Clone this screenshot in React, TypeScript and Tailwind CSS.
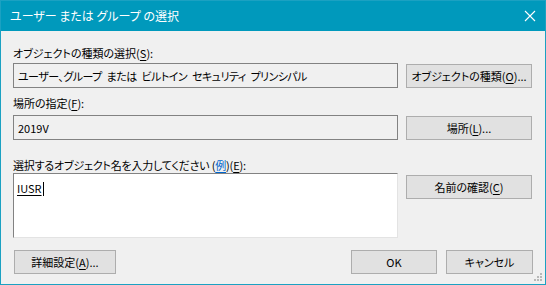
import React from "react";

const font = "font-['Noto_Sans_CJK_JP','Noto_Sans',sans-serif] [font-feature-settings:'palt']";

function U({ children }: { children: React.ReactNode }) {
  return <span className="underline underline-offset-[2px]">{children}</span>;
}

function Btn({ children, className = "" }: { children: React.ReactNode; className?: string }) {
  return (
    <div
      className={`flex items-center justify-center whitespace-nowrap border border-[#adadad] bg-[#e1e1e1] text-[11px] leading-[16px] text-black ${className}`}
    >
      {children}
    </div>
  );
}

export default function App() {
  return (
    <div className={`relative w-[546px] h-[285px] border border-[#1ba1c2] bg-[#f0f0f0] flex flex-col ${font}`}>
      <div className="h-[30px] bg-[#0099bc] flex items-center justify-between pl-[9px] pr-[8px] text-white text-[12px] leading-[16px]">
        <span>ユーザー または グループ の選択</span>
        <svg width="12" height="12" viewBox="0 0 12 12" className="mr-[1px]">
          <path d="M1 1 L11 11 M11 1 L1 11" stroke="white" strokeWidth="1.1" />
        </svg>
      </div>
      <div className="flex flex-col pl-[12px] pr-[12px] pt-[14px] text-[11px] leading-[16px] text-black whitespace-nowrap">
        <div className="h-[16px]">
          オブジェクトの種類の選択(<U>S</U>):
        </div>
        <div className="flex items-center mt-[2px]">
          <div className="w-[385px] h-[25px] border border-[#828282] flex items-center pl-[4px] tracking-[-0.55px] [word-spacing:3px]">
            ユーザー、グループ または ビルトイン セキュリティ プリンシパル
          </div>
          <Btn className="ml-[8px] w-[126px] h-[24px]">
            オブジェクトの種類(<U>O</U>)...
          </Btn>
        </div>
        <div className="h-[16px] mt-[7px]">
          場所の指定(<U>F</U>):
        </div>
        <div className="flex items-center mt-[4px]">
          <div className="w-[385px] h-[25px] border border-[#828282] flex items-center pl-[4px]">
            2019V
          </div>
          <Btn className="ml-[8px] w-[126px] h-[24px]">
            場所(<U>L</U>)...
          </Btn>
        </div>
        <div className="h-[16px] mt-[17px] tracking-[-0.2px]">
          選択するオブジェクト名を入力してください (<span className="text-[#0066cc] underline underline-offset-[2px]">例</span>)(<U>E</U>):
        </div>
        <div className="flex items-start">
          <div className="w-[385px] h-[65px] border border-[#828282] border-r-[#e3e3e3] border-b-[#e3e3e3] bg-white pl-[3px] pt-[6px]">
            <span className="underline underline-offset-[2px]">IUSR</span>
            <span className="inline-block w-[1px] h-[14px] bg-black align-[-3px] ml-[1px]" />
          </div>
          <Btn className="ml-[8px] mt-[2px] w-[126px] h-[24px]">
            名前の確認(<U>C</U>)
          </Btn>
        </div>
        <div className="flex items-center mt-[12px]">
          <Btn className="ml-[1px] w-[102px] h-[24px]">
            詳細設定(<U>A</U>)...
          </Btn>
          <div className="flex-1" />
          <Btn className="w-[86px] h-[24px]">OK</Btn>
          <Btn className="ml-[9px] w-[87px] h-[24px]">キャンセル</Btn>
        </div>
      </div>
      <svg width="10" height="10" viewBox="0 0 10 10" className="absolute right-[1px] bottom-[1px]">
        <g fill="#b8b8b8">
          <rect x="6" y="0" width="2" height="2" />
          <rect x="3" y="3" width="2" height="2" />
          <rect x="6" y="3" width="2" height="2" />
          <rect x="0" y="6" width="2" height="2" />
          <rect x="3" y="6" width="2" height="2" />
          <rect x="6" y="6" width="2" height="2" />
        </g>
      </svg>
    </div>
  );
}
